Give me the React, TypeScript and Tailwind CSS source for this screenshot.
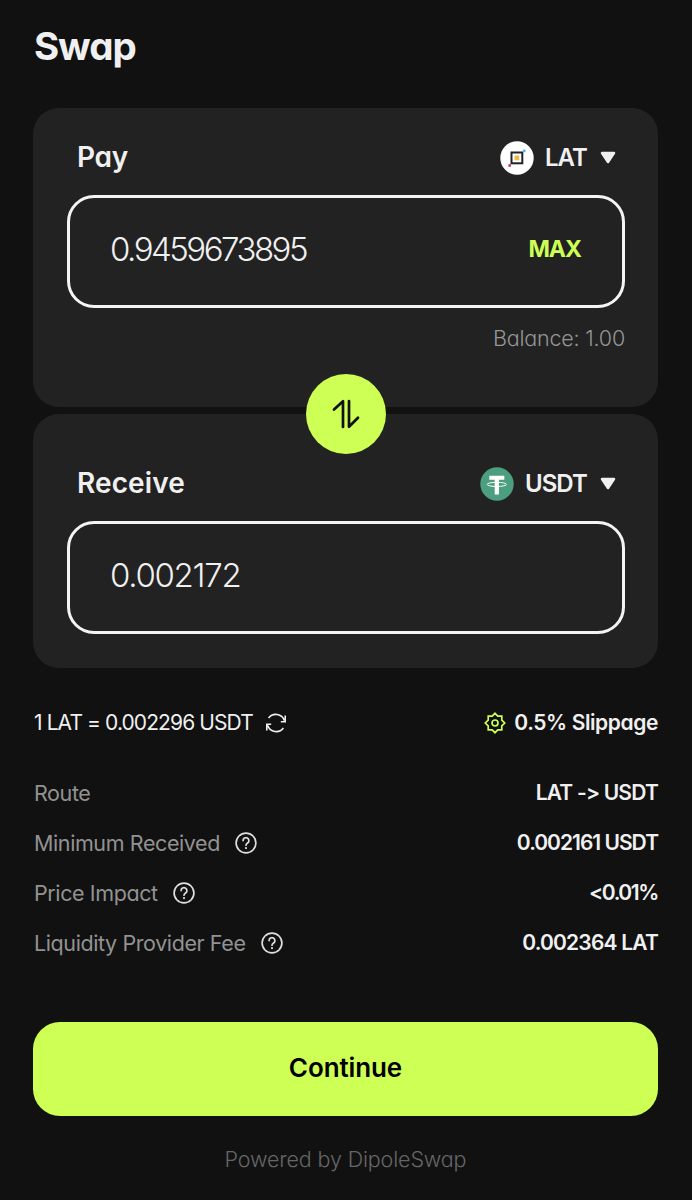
import type { ReactNode } from "react";

function LatIcon() {
  return (
    <svg className="size-[34px]" viewBox="0 0 34 34">
      <circle cx="17" cy="17" r="16.700" fill="#fff" />
      <rect x="11.500" y="11.500" width="10.800" height="10.800" fill="none" stroke="#20202e" strokeWidth="2" />
      <rect x="14.500" y="14.500" width="4.800" height="4.800" fill="#eebb3f" />
      <rect x="22.900" y="8.600" width="2.600" height="2.600" fill="#56b3dc" />
      <rect x="8.400" y="23.200" width="2.600" height="2.600" fill="#c43a6c" />
    </svg>
  );
}

function UsdtIcon() {
  return (
    <svg className="size-[34px]" viewBox="0 0 34 34">
      <circle cx="17" cy="17" r="16.700" fill="#4b9f7e" />
      <path d="M9.300 8.700h15v4h-5.400v14.800h-4.200V12.700H9.300z" fill="#fff" />
      <ellipse cx="16.800" cy="17.400" rx="9.700" ry="2.100" fill="none" stroke="#fff" strokeWidth="1" />
    </svg>
  );
}

function Caret() {
  return (
    <svg className="h-[13px] w-4" viewBox="0 0 16 13">
      <path d="M2 2h12L8 11z" fill="#f0f0f0" stroke="#f0f0f0" strokeWidth="2.500" strokeLinejoin="round" />
    </svg>
  );
}

function HelpIcon() {
  return (
    <svg className="size-[22px]" viewBox="0 0 22 22" fill="none" stroke="#dedede" strokeLinecap="round">
      <circle cx="11" cy="11" r="9.900" strokeWidth="1.700" />
      <path d="M8.100 8.600a2.900 2.900 0 1 1 4.500 2.400c-1 .7-1.600 1.100-1.600 2.200" strokeWidth="1.700" />
      <circle cx="11" cy="16.100" r="1.100" fill="#dedede" stroke="none" />
    </svg>
  );
}

function Token({ icon, name }: { icon: ReactNode; name: string }) {
  return (
    <div className="flex items-center">
      {icon}
      <span className="ml-[11px] text-[24px] font-semibold tracking-[-0.9px]">{name}</span>
      <span className="ml-[13px]">
        <Caret />
      </span>
    </div>
  );
}

type RowProps = { label: string; value: string; tracking: string; help?: boolean };

function Row({ label, value, tracking, help = true }: RowProps) {
  return (
    <div className="flex h-[50px] items-center justify-between">
      <div className="flex items-center gap-[15px] pl-px text-[21.500px] text-[#929292]">
        <span className="tracking-[-0.4px]">{label}</span>
        {help && <HelpIcon />}
      </div>
      <span className={`font-semibold ${tracking}`}>{value}</span>
    </div>
  );
}

export default function App() {
  return (
    <main className="h-[1200px] w-[692px] overflow-hidden bg-[#111111] pt-[23px] pr-[34px] pl-[33px] font-['Inter','Liberation_Sans',sans-serif] text-[21px] text-[#f0f0f0] [font-feature-settings:'cv11']">
      <h1 className="h-[85px] pl-px text-[38.500px] leading-[46px] font-bold tracking-[-1.1px]">Swap</h1>

      <section className="relative h-[299px] rounded-[26px] bg-[#222222] pt-[31px] pr-[33px] pl-[34px]">
        <div className="flex h-[37px] items-center justify-between pr-[9px] pl-[10px]">
          <h2 className="pb-[2px] text-[28px] font-semibold tracking-[-0.3px]">Pay</h2>
          <Token icon={<LatIcon />} name="LAT" />
        </div>
        <div className="mt-[19px] flex h-[113px] items-center justify-between rounded-[27px] border-[3.500px] border-[#f4f4f4] pr-[41px] pb-1 pl-10">
          <span className="text-[33px] font-[350] tracking-[-2.5px]">0.9459673895</span>
          <span className="text-[23px] font-bold tracking-[-1px] text-[#cdff54]">MAX</span>
        </div>
        <p className="mt-[13px] text-right text-[21.500px] leading-[34px] font-[350] tracking-[-0.2px] text-[#969696]">Balance: 1.00</p>
        <button className="absolute -bottom-[47px] left-[273px] flex size-20 items-center justify-center rounded-full bg-[#cdff54]">
          <svg className="h-[30px] w-[28px]" viewBox="0 0 28 30" fill="none" stroke="#111" strokeWidth="2.700" strokeLinecap="round" strokeLinejoin="round">
            <path d="M2 10.500 11 2.200v25.800" />
            <path d="M17 2v25.800l9-9" />
          </svg>
        </button>
      </section>

      <section className="mt-[7px] h-[254px] rounded-[26px] bg-[#222222] pt-[51px] pr-[33px] pl-[34px]">
        <div className="flex h-[37px] items-center justify-between pr-[9px] pl-[10px]">
          <h2 className="pb-[2px] text-[28px] font-semibold tracking-[0.1px]">Receive</h2>
          <Token icon={<UsdtIcon />} name="USDT" />
        </div>
        <div className="mt-[19px] flex h-[113px] items-center rounded-[27px] border-[3.500px] border-[#f4f4f4] pb-1 pl-10">
          <span className="text-[33px] font-[350] tracking-[-1.3px]">0.002172</span>
        </div>
      </section>

      <div className="mt-[38px] flex h-[34px] items-center justify-between">
        <div className="flex items-center gap-3 pl-px">
          <span className="tracking-[-0.9px]">1 LAT = 0.002296 USDT</span>
          <svg className="size-[22px]" viewBox="0 0 22 22" fill="none" stroke="#f0f0f0" strokeWidth="1.600">
            <path d="M3.600 6A9 9 0 0 1 19.300 8.500M20.200 3.500v6.300h-4.400" />
            <path d="M18.400 16A9 9 0 0 1 2.700 13.500M1.800 18.500v-6.300h4.400" />
          </svg>
        </div>
        <div className="flex items-center gap-2">
          <svg className="size-[22px]" viewBox="0 0 22 22" fill="none" stroke="#cdff54" strokeWidth="1.700">
            <path d="M11 1.300 13.800 4.200H17.800V8.200L20.700 11 17.800 13.800V17.800H13.800L11 20.700 8.200 17.800H4.200V13.800L1.300 11 4.200 8.200V4.200H8.200Z" />
            <circle cx="11" cy="11" r="3" />
          </svg>
          <span className="font-semibold tracking-[-0.4px]">0.5% Slippage</span>
        </div>
      </div>

      <div className="mt-[28px]">
        <Row label="Route" value="LAT -> USDT" tracking="tracking-[-0.8px]" help={false} />
        <Row label="Minimum Received" value="0.002161 USDT" tracking="tracking-[-1px]" />
        <Row label="Price Impact" value="<0.01%" tracking="tracking-[-1.4px]" />
        <Row label="Liquidity Provider Fee" value="0.002364 LAT" tracking="tracking-[-0.8px]" />
      </div>

      <button className="mt-[54px] flex h-[94px] w-full items-center justify-center rounded-[27px] bg-[#cdff54] pb-[3px] text-[26px] font-semibold tracking-[-0.1px] text-black">
        Continue
      </button>
      <p className="mt-[26px] text-center text-[21.500px] leading-[34px] font-light tracking-[-0.15px] text-[#666666]">Powered by DipoleSwap</p>
    </main>
  );
}
